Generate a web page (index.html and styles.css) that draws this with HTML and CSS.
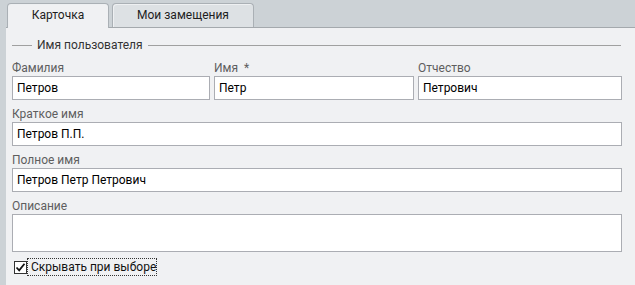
FILE: index.html
```html
<!DOCTYPE html>
<html lang="ru">
<head>
    <meta charset="UTF-8">
    <meta name="viewport" content="width=device-width, initial-scale=1.0">
    <title>Карточка пользователя</title>
    <link rel="stylesheet" href="styles.css">
</head>
<body>
    <div class="tabs">
        <div class="tab active">Карточка</div>
        <div class="tab">Мои замещения</div>
    </div>
    <div class="panel">
        <div class="group-title">
            <span class="line short"></span>
            <span>Имя пользователя</span>
            <span class="line"></span>
        </div>
        <div class="row three">
            <div class="field">
                <label>Фамилия</label>
                <input type="text" value="Петров">
            </div>
            <div class="field">
                <label>Имя &nbsp;*</label>
                <input type="text" value="Петр">
            </div>
            <div class="field">
                <label>Отчество</label>
                <input type="text" value="Петрович">
            </div>
        </div>
        <div class="field">
            <label>Краткое имя</label>
            <input type="text" value="Петров П.П.">
        </div>
        <div class="field">
            <label>Полное имя</label>
            <input type="text" value="Петров Петр Петрович">
        </div>
        <div class="field">
            <label>Описание</label>
            <textarea></textarea>
        </div>
        <div class="check-row">
            <span class="checkbox">
                <svg width="11" height="11" viewBox="0 0 11 11">
                    <path d="M1.5 5.5 L4.2 8.3 L9.5 1.8" fill="none" stroke="#111" stroke-width="1.8"/>
                </svg>
            </span>
            <span class="check-label">Скрывать при выборе</span>
        </div>
    </div>
</body>
</html>
```

FILE: styles.css
```css
body {
    margin: 0;
    background-color: #ccd2d6;
    font-family: Roboto, "Noto Sans", sans-serif;
    font-size: 12px;
    color: #222;
}
.tabs {
    display: flex;
    gap: 3px;
    padding: 3px 0 0 7px;
    height: 24px;
}
.tab {
    height: 24px;
    line-height: 22px;
    box-sizing: border-box;
    text-align: center;
    border: 1px solid #aab0b5;
    border-bottom: none;
    border-radius: 4px 4px 0 0;
    background-color: #dde1e4;
    box-shadow: inset 1px 1px 0 #eef0f2;
    color: #1e1e1e;
    width: 142px;
}
.tab.active {
    width: 102px;
    background-color: #f0f1f3;
    height: 25px;
    position: relative;
    z-index: 1;
}
.panel {
    margin-left: 6px;
    border-top: 1px solid #a4a9ad;
    background-color: #f0f1f3;
    padding: 9px 13px 20px 6px;
    height: 228px;
}
.group-title {
    display: flex;
    align-items: center;
    gap: 5px;
    height: 16px;
    line-height: 16px;
    color: #333;
    margin-bottom: 7px;
}
.group-title .line {
    flex: 1;
    height: 1px;
    background-color: #a0a0a0;
    margin-right: 1px;
}
.group-title .line.short {
    flex: none;
    width: 20px;
    margin-right: 0;
}
.row.three {
    display: grid;
    grid-template-columns: 198px 200px 1fr;
    gap: 4px;
}
.field {
    display: flex;
    flex-direction: column;
    margin-bottom: 6px;
}
label {
    height: 16px;
    line-height: 16px;
    color: #5e5e5e;
}
input, textarea {
    font-family: Roboto, "Noto Sans", sans-serif;
    font-size: 12px;
    color: #000;
    background-color: #fff;
    border: 1px solid #abadb3;
    box-sizing: border-box;
    height: 24px;
    padding: 0 4px;
    margin: 0;
    outline: none;
}
textarea {
    height: 38px;
    resize: none;
}
.check-row {
    display: flex;
    align-items: center;
    margin-top: 2px;
    height: 18px;
    padding-left: 2px;
}
.checkbox {
    width: 13px;
    height: 13px;
    box-sizing: border-box;
    border: 1px solid #333;
    background-color: #fff;
    display: flex;
    align-items: center;
    justify-content: center;
}
.check-label {
    padding: 0 0 0 3px;
    border: 1px dotted #333;
    line-height: 16px;
    color: #111;
}
```
